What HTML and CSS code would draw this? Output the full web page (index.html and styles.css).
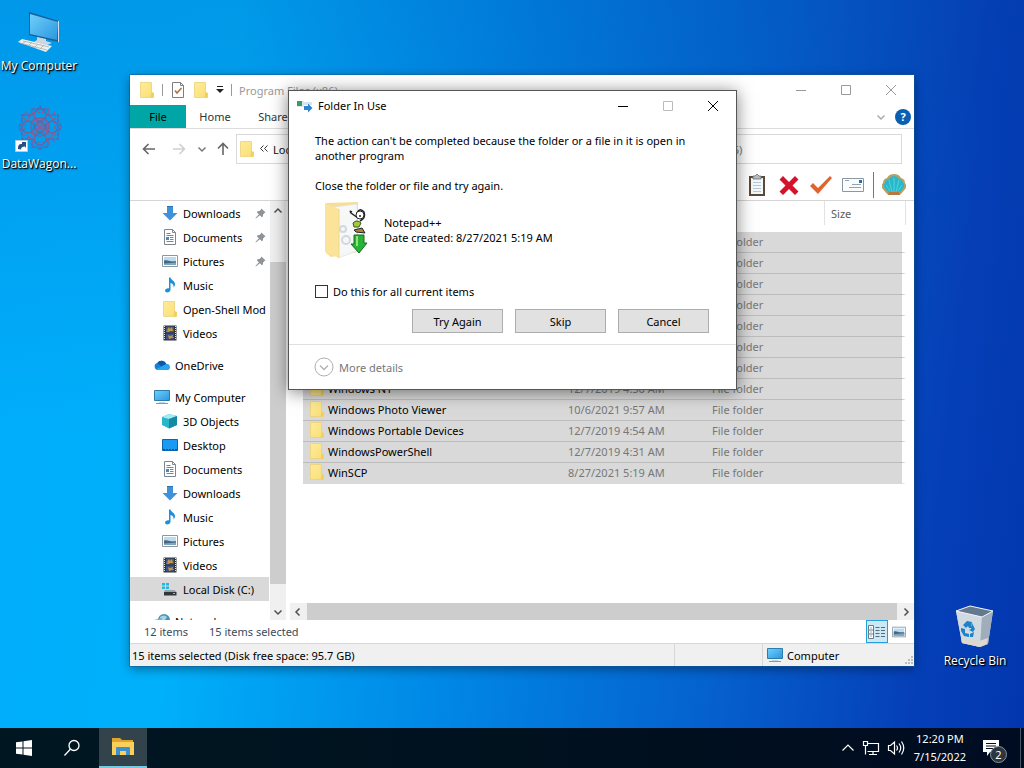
FILE: index.html
```html
<!DOCTYPE html>
<html lang="en">
<head>
    <meta charset="UTF-8">
    <meta name="viewport" content="width=device-width, initial-scale=1.0">
    <title>Desktop</title>
    <link rel="stylesheet" href="styles.css">
</head>
<body>
    <!-- shared icons -->
    <svg class="sprite" aria-hidden="true">
        <defs>
            <linearGradient id="folder-fill" x1="0" y1="0" x2="1" y2="1">
                <stop offset="0" stop-color="#ffec9a"/>
                <stop offset="1" stop-color="#f8de74"/>
            </linearGradient>
            <linearGradient id="screen-fill" x1="0" y1="0" x2="1" y2="1">
                <stop offset="0" stop-color="#6fd0fb"/>
                <stop offset="1" stop-color="#2a96e0"/>
            </linearGradient>
            <symbol id="i-folder" viewBox="0 0 16 16">
                <path d="M1.500.500h11v10l2 .5v4.500h-13z" fill="url(#folder-fill)" stroke="#ecd077" stroke-width=".8"/>
                <path d="M12.500 10.500l-1 5h3v-4.500z" fill="#f0cf5a"/>
            </symbol>
            <symbol id="i-down" viewBox="0 0 16 16">
                <path d="M5 1h6v7h4.500L8 15.500.500 8H5z" fill="#3f92d9"/>
                <path d="M5 1h6v1H5z" fill="#2a72b8"/>
            </symbol>
            <symbol id="i-doc" viewBox="0 0 16 16">
                <path d="M2.500.500h8l3 3v12h-11z" fill="#fff" stroke="#7c8791"/>
                <path d="M10.500.500v3h3" fill="none" stroke="#7c8791"/>
                <path d="M4.500 4.500h4M4.500 6.500h7M8 8.500h3.500M8 10.500h3.500M4.500 12.500h7" stroke="#5590bd"/>
                <path d="M4 8h3v3H4z" fill="#4d88b4"/>
            </symbol>
            <symbol id="i-pic" viewBox="0 0 16 16">
                <path d="M.5 2.500h15v11H.500z" fill="#fff" stroke="#8d979f"/>
                <path d="M2 4h12v8H2z" fill="#b9dcf2"/>
                <path d="M2 7.500c3-1 5 .5 7 .8 2 .3 3-.3 5 0V12H2z" fill="#4a6781"/>
                <path d="M2 10.500l12-1V12H2z" fill="#7ba7bf"/>
            </symbol>
            <symbol id="i-music" viewBox="0 0 16 16">
                <path d="M7 .5h1.500c.3 2.500 4.500 3.300 4.500 6.500 0 1.500-.6 2.500-1.400 3.400.4-2.600-1-3.900-3.100-4.400v6.500c0 1.800-1.600 3-3.300 3-1.400 0-2.200-.8-2.200-1.900 0-1.600 2-2.700 4-2.300z" fill="#1e90d8"/>
            </symbol>
            <symbol id="i-video" viewBox="0 0 16 16">
                <path d="M1.500.500h13v15h-13z" fill="#30343a"/>
                <path d="M2.500 1v14M13.500 1v14" stroke="#e4e6e8" stroke-dasharray="1 1"/>
                <path d="M4 1.500h8v6H4z" fill="#40557f"/>
                <path d="M4 8.500h8v6H4z" fill="#3d4f86"/>
                <path d="M5 5l2-3 1 2 2-2 1 4H6zM6 10l2 1 3-1-1 3-3 1z" fill="#c79a41"/>
                <path d="M4.500 6.500h3M8 12.500h3.500" stroke="#58a9e0"/>
            </symbol>
            <symbol id="i-cloud" viewBox="0 0 16 16">
                <path d="M4 13a3.500 3.500 0 0 1-.7-6.900A5 5 0 0 1 12.300 7 3 3 0 0 1 13 13z" fill="#1580d8"/>
                <path d="M3.300 6.100A5 5 0 0 1 12.300 7L7.500 9.500z" fill="#0c58a8"/>
                <path d="M2 12.300L12.300 7A3 3 0 0 1 13 13H4q-1.200 0-2-.7z" fill="#2aa4ee"/>
            </symbol>
            <symbol id="i-pc" viewBox="0 0 16 16">
                <path d="M.5 1.500h15v10H.500z" fill="url(#screen-fill)" stroke="#2d7cae"/>
                <path d="M2 14.500h12" stroke="#7a9cb2"/>
                <path d="M5 13h6v1H5z" fill="#c6d3dc"/>
            </symbol>
            <symbol id="i-cube" viewBox="0 0 16 16">
                <path d="M0 4l7-3 8 2v9l-8 3.500L0 12z" fill="#2bb5ca"/>
                <path d="M0 4l7-3 8 2-8 3z" fill="#a7ebf2"/>
                <path d="M7 6l8-3v9l-8 3.500z" fill="#138a9f"/>
            </symbol>
            <symbol id="i-desktop" viewBox="0 0 16 16">
                <path d="M.5 2.500h15v11H.500z" fill="#1a9af5" stroke="#0c65ad"/>
                <path d="M1 12.500h14" stroke="#0b4f8c" stroke-dasharray="2 1"/>
            </symbol>
            <symbol id="i-disk" viewBox="0 0 16 16">
                <path d="M0 2h3v2.500H0zM4 2h3v2.500H4zM0 5.500h3V8H0zM4 5.500h3V8H4z" fill="#27b6dd"/>
                <path d="M3 9h9.500l2 2H2z" fill="#9aa3aa"/>
                <path d="M2 11h12.500v3.500H2z" fill="#30363a"/>
                <path d="M11 12.500h2" stroke="#5ee07c"/>
            </symbol>
            <symbol id="i-net" viewBox="0 0 16 16">
                <circle cx="10" cy="7" r="6" fill="#4b94b8"/>
                <path d="M6 4q4-3 7 0l-2 3-4 2z" fill="#a8d6dc"/>
                <path d="M0 7l8-2v8l-8-1z" fill="#67b6e2"/>
            </symbol>
            <symbol id="i-pin" viewBox="0 0 12 12">
                <path d="M7 .5L11.500 5l-1.200.5-1.500 1.500-.3 2.300-1 .7-2.200-2.200L1 11.500.500 11l3.700-4.300L2 4.500l.8-1 2.200-.3L6.600 1.700z" fill="#8c9399"/>
            </symbol>
            <symbol id="i-chev" viewBox="0 0 10 10">
                <path d="M1.500 3.500L5 7l3.500-3.500" fill="none" stroke="currentColor" stroke-width="1.500"/>
            </symbol>
        </defs>
    </svg>

    <main class="desktop">
        <nav class="shortcuts">
            <a class="shortcut" href="#computer">
                <svg width="44" height="44" viewBox="0 0 44 44">
                    <path d="M12 2l30 9-1 21-29-7z" fill="#1d5f96"/>
                    <path d="M13 4l28 8-1 18-27-6z" fill="url(#screen-fill)"/>
                    <path d="M42 11v21l-1 .5V11z" fill="#cfdde8"/>
                    <path d="M20 27l9 2v2l6 2-5 2-13-3 3-2z" fill="#cfd7de"/>
                    <path d="M1 32l4-3 30 7-6 6z" fill="#f0f0ec"/>
                    <path d="M3 33l27 7M6 31l26 6M9 31l-4 3M15 32l-4 4M21 34l-4 4M27 35l-4 4" stroke="#a8b0b5" stroke-width=".8"/>
                </svg>
                <span>My Computer</span>
            </a>
            <a class="shortcut" href="#datawagon">
                <svg width="48" height="50" viewBox="0 0 48 50">
                    <g fill="none" stroke="#7a5296" stroke-width="1.500" opacity=".75">
                        <circle cx="25" cy="25" r="5"/>
                        <circle cx="25" cy="25" r="9" stroke="#c04468"/>
                        <circle cx="25" cy="13" r="6"/>
                        <circle cx="25" cy="37" r="6"/>
                        <circle cx="13" cy="25" r="6"/>
                        <circle cx="37" cy="25" r="6"/>
                        <path d="M7 13h10v-6h6l2-3 2 3h6v6h10v6l3 6-3 6v6H33v8h-6l-2 3-2-3h-6v-8H7v-6l-3-6 3-6z" stroke-dasharray="4 1"/>
                        <path d="M10 10l30 30M40 10L10 40M16 8l18 34M34 8L16 42M8 16l34 18M8 34l34-18" stroke="#a9517e" stroke-dasharray="3 2"/>
                        <circle cx="25" cy="25" r="15" stroke="#cc4060" stroke-dasharray="2 2"/>
                    </g>
                    <path d="M.5 38.500h12v11H.500z" fill="#fff" stroke="#b8cad6"/>
                    <path d="M3 47c0-4 1-5 4-5v-2h4v6l-1-1.500q-4 0-4 3z" fill="#264f83"/>
                </svg>
                <span>DataWagon...</span>
            </a>
        </nav>

        <a class="shortcut recycle" href="#recycle">
            <svg width="44" height="46" viewBox="0 0 44 46">
                <path d="M3 8l14-5 23 5-5 33-8 3-18-4z" fill="#b9c6d4"/>
                <path d="M3 8l14-5 23 5-11 6z" fill="#64788e"/>
                <path d="M3 8l26 6-2 30-18-4z" fill="#d1d9e1"/>
                <path d="M29 14l11-6-5 33-8 3z" fill="#a0adba"/>
                <path d="M8 35l18 3 9-3-1 6-7 3-18-4z" fill="#ddd8d0"/>
                <path d="M3 8l14-5 23 5-11 6z" fill="none" stroke="#edf3f8"/>
                <path d="M10 22l4-4 5 1-1 4 2 2h-4l-1-2-2 2zM19 20l3 6-2 3-4-2 2-1zM8 25l4 1v4l4 1v3l-5-1-3-5zM17 31l4-2-1 5h-3z" fill="#1b82cb"/>
            </svg>
            <span>Recycle Bin</span>
        </a>

        <section class="explorer" aria-label="Program Files (x86)">
            <header class="titlebar">
                <svg class="icon"><use href="#i-folder"/></svg>
                <i class="divider"></i>
                <svg class="icon" viewBox="0 0 16 16">
                    <path d="M2.500.500h8l3 3v12h-11z" fill="#fff" stroke="#7e7e7e"/>
                    <path d="M10.500.500v3h3" fill="none" stroke="#7e7e7e"/>
                    <path d="M5 8.500l2 2.500 4.500-5" fill="none" stroke="#a8763e" stroke-width="1.600"/>
                </svg>
                <svg class="icon"><use href="#i-folder"/></svg>
                <svg class="customize" width="8" height="8" viewBox="0 0 8 8">
                    <path d="M1 .5h6" stroke="#222"/><path d="M0 3h8L4 7z" fill="#222"/>
                </svg>
                <i class="divider"></i>
                <span class="window-title">Program Files (x86)</span>
                <div class="caption">
                    <button type="button" aria-label="Minimize"><svg width="12" height="12" viewBox="0 0 12 12"><path d="M1 6.500h10"/></svg></button>
                    <button type="button" aria-label="Maximize"><svg width="12" height="12" viewBox="0 0 12 12"><path d="M1.500 1.500h9v9h-9z"/></svg></button>
                    <button type="button" aria-label="Close"><svg width="12" height="12" viewBox="0 0 12 12"><path d="M1 1l10 10M11 1L1 11"/></svg></button>
                </div>
            </header>

            <nav class="ribbon">
                <button type="button" class="tab file">File</button>
                <button type="button" class="tab">Home</button>
                <button type="button" class="tab">Share</button>
                <span class="ribbon-end">
                    <svg class="expand" width="10" height="10"><use href="#i-chev"/></svg>
                    <button type="button" class="help" aria-label="Help">?</button>
                </span>
            </nav>

            <div class="address-row">
                <button type="button" aria-label="Back"><svg width="14" height="14" viewBox="0 0 14 14"><path d="M13 7H2M6.500 2L1.500 7l5 5"/></svg></button>
                <button type="button" class="faded" aria-label="Forward"><svg width="14" height="14" viewBox="0 0 14 14"><path d="M1 7h11M7.500 2l5 5-5 5"/></svg></button>
                <button type="button" class="recent" aria-label="Recent locations"><svg width="10" height="10"><use href="#i-chev"/></svg></button>
                <button type="button" class="up" aria-label="Up"><svg width="14" height="14" viewBox="0 0 14 14"><path d="M7 13V2M2 6.500l5-5 5 5"/></svg></button>
                <div class="address">
                    <svg class="icon"><use href="#i-folder"/></svg>
                    <svg width="10" height="10" viewBox="0 0 10 10"><path d="M4.500 1.500L1.500 4.500l3 3M8.500 1.500L5.500 4.500l3 3" fill="none" stroke="#333"/></svg>
                    <span>Local Disk (C:)</span>
                </div>
                <input class="search" type="text" aria-label="Search" placeholder="Search Program Files (x86)">
            </div>

            <div class="toolbar">
                <button type="button" aria-label="Paste">
                    <svg width="24" height="24" viewBox="0 0 24 24">
                        <path d="M4 3h16v20H4z" fill="#5b4a3a"/>
                        <path d="M6 5h12v16H6z" fill="#f3f8fb"/>
                        <path d="M8 9.500h8M8 12.500h8M8 15.500h8M8 18.500h8" stroke="#b6cad6"/>
                        <path d="M8 3h2l2-2 2 2h2v3H8z" fill="#b7bcc0" stroke="#6c7073" stroke-width=".8"/>
                    </svg>
                </button>
                <button type="button" aria-label="Delete">
                    <svg width="24" height="24" viewBox="0 0 24 24">
                        <path d="M6 3l6 6 6-6 3.500 3.500L15.500 12.500l6 6L18 22l-6-6-6 6-3.500-3.500 6-6-6-6z" fill="#d5122b"/>
                    </svg>
                </button>
                <button type="button" aria-label="Properties">
                    <svg width="24" height="24" viewBox="0 0 24 24">
                        <path d="M1 13l3-3 5 5L21 3l2 2L9 21z" fill="#e0632e"/>
                    </svg>
                </button>
                <button type="button" aria-label="Send">
                    <svg width="24" height="24" viewBox="0 0 24 24">
                        <path d="M1.500 5.500h21v13h-21z" fill="#fbfcfd" stroke="#8a98a5"/>
                        <path d="M18 7h3v3h-3z" fill="#2f6ca8"/>
                        <path d="M4 7.500h4M11 11.500h9M8 14.500h12" stroke="#90a4b4"/>
                    </svg>
                </button>
                <i class="tool-divider"></i>
                <button type="button" aria-label="Classic Explorer settings">
                    <svg width="24" height="24" viewBox="0 0 24 24">
                        <path d="M5 21L0 15q-1-3 1-5 0-4 4-5 2-4 7-4t7 4q4 1 4 5 2 2 1 5l-5 6-2 1H7z" fill="#b8a066"/>
                        <path d="M5 18l-3-4q-1-3 1-4 0-3 4-4 2-3 5-3t5 3q4 1 4 4 2 1 1 4l-3 4-7 3z" fill="#27b9cb"/>
                        <path d="M12 20V5M10 19L7 7M14 19l3-12M8 18l-4-6M16 18l4-6" stroke="#5fd8df" stroke-width=".8" fill="none"/>
                        <path d="M7 19h10l1 3H6z" fill="#b8793e"/>
                    </svg>
                </button>
            </div>

            <div class="panes">
                <div class="tree">
                    <ul>
                        <li><svg class="icon"><use href="#i-down"/></svg>Downloads<svg class="pin"><use href="#i-pin"/></svg></li>
                        <li><svg class="icon"><use href="#i-doc"/></svg>Documents<svg class="pin"><use href="#i-pin"/></svg></li>
                        <li><svg class="icon"><use href="#i-pic"/></svg>Pictures<svg class="pin"><use href="#i-pin"/></svg></li>
                        <li><svg class="icon"><use href="#i-music"/></svg>Music</li>
                        <li><svg class="icon"><use href="#i-folder"/></svg>Open-Shell Mod</li>
                        <li><svg class="icon"><use href="#i-video"/></svg>Videos</li>
                        <li class="root"><svg class="icon"><use href="#i-cloud"/></svg>OneDrive</li>
                        <li class="root"><svg class="icon"><use href="#i-pc"/></svg>My Computer</li>
                        <li><svg class="icon"><use href="#i-cube"/></svg>3D Objects</li>
                        <li><svg class="icon"><use href="#i-desktop"/></svg>Desktop</li>
                        <li><svg class="icon"><use href="#i-doc"/></svg>Documents</li>
                        <li><svg class="icon"><use href="#i-down"/></svg>Downloads</li>
                        <li><svg class="icon"><use href="#i-music"/></svg>Music</li>
                        <li><svg class="icon"><use href="#i-pic"/></svg>Pictures</li>
                        <li><svg class="icon"><use href="#i-video"/></svg>Videos</li>
                        <li class="current"><svg class="icon"><use href="#i-disk"/></svg>Local Disk (C:)</li>
                        <li class="root"><svg class="icon"><use href="#i-net"/></svg>Network</li>
                    </ul>
                </div>
                <div class="scroll-v">
                    <svg class="flip" width="10" height="10"><use href="#i-chev"/></svg>
                    <i class="thumb"></i>
                    <svg width="10" height="10"><use href="#i-chev"/></svg>
                </div>
                <div class="files">
                    <table>
                        <colgroup><col class="c-name"><col class="c-date"><col class="c-type"><col class="c-size"></colgroup>
                        <thead>
                            <tr><th></th><th></th><th></th><th>Size</th></tr>
                        </thead>
                        <tbody>
                            <tr><td></td><td></td><td>File folder</td><td></td></tr>
                            <tr><td></td><td></td><td>File folder</td><td></td></tr>
                            <tr><td></td><td></td><td>File folder</td><td></td></tr>
                            <tr><td></td><td></td><td>File folder</td><td></td></tr>
                            <tr><td></td><td></td><td>File folder</td><td></td></tr>
                            <tr><td></td><td></td><td>File folder</td><td></td></tr>
                            <tr><td></td><td></td><td>File folder</td><td></td></tr>
                            <tr><td><svg class="icon"><use href="#i-folder"/></svg>Windows NT</td><td>12/7/2019 4:50 AM</td><td>File folder</td><td></td></tr>
                            <tr><td><svg class="icon"><use href="#i-folder"/></svg>Windows Photo Viewer</td><td>10/6/2021 9:57 AM</td><td>File folder</td><td></td></tr>
                            <tr><td><svg class="icon"><use href="#i-folder"/></svg>Windows Portable Devices</td><td>12/7/2019 4:54 AM</td><td>File folder</td><td></td></tr>
                            <tr><td><svg class="icon"><use href="#i-folder"/></svg>WindowsPowerShell</td><td>12/7/2019 4:31 AM</td><td>File folder</td><td></td></tr>
                            <tr><td><svg class="icon"><use href="#i-folder"/></svg>WinSCP</td><td>8/27/2021 5:19 AM</td><td>File folder</td><td></td></tr>
                        </tbody>
                    </table>
                    <div class="scroll-h">
                        <svg class="left" width="10" height="10"><use href="#i-chev"/></svg>
                        <i class="thumb"></i>
                        <svg class="right" width="10" height="10"><use href="#i-chev"/></svg>
                    </div>
                </div>
            </div>

            <div class="details">
                <span>12 items</span>
                <span>15 items selected</span>
                <div class="views">
                    <button type="button" class="view active" aria-label="Details view">
                        <svg width="18" height="14" viewBox="0 0 18 14">
                            <path d="M.5.500h5v13h-5zM.5 5h5M.5 9h5" fill="#fff" stroke="#6c7d89"/>
                            <path d="M2.500 3h1M2.500 7h1M2.500 11h1" stroke="#2d5f86"/>
                            <path d="M7.500 2.500h4M13 2.500h4M7.500 5.500h4M13 5.500h4M7.500 8.500h4M13 8.500h4M7.500 11.500h4M13 11.500h4" stroke="#5a6a75"/>
                        </svg>
                    </button>
                    <button type="button" class="view" aria-label="Large icons view"><svg width="14" height="14"><use href="#i-pic"/></svg></button>
                </div>
            </div>

            <footer class="status">
                <span class="status-text">15 items selected (Disk free space: 95.7 GB)</span>
                <span class="status-blank"></span>
                <span class="status-zone">
                    <svg class="icon"><use href="#i-pc"/></svg>Computer
                    <svg class="grip" width="10" height="10" viewBox="0 0 10 10">
                        <path d="M7 0h2v2H7zM4 3h2v2H4zM7 3h2v2H7zM1 6h2v2H1zM4 6h2v2H4zM7 6h2v2H7z" fill="#bdbdbd"/>
                    </svg>
                </span>
            </footer>
        </section>

        <section class="dialog" role="dialog" aria-labelledby="dialog-title">
            <header class="dialog-title">
                <svg width="16" height="16" viewBox="0 0 16 16">
                    <path d="M0 3h7v6H0z" fill="#dbe8ee"/><path d="M0 3h5v5H0z" fill="#3d9a5a"/><path d="M5 4h10v3H5z" fill="#d3e5f1"/>
                    <path d="M7 8h4V5.500l4.500 4.500-4.500 4.500V12H7z" fill="#2f83d0"/>
                </svg>
                <h1 id="dialog-title">Folder In Use</h1>
                <div class="caption">
                    <button type="button" aria-label="Minimize"><svg width="12" height="12" viewBox="0 0 12 12"><path d="M1 6.500h10"/></svg></button>
                    <button type="button" aria-label="Maximize" disabled><svg width="12" height="12" viewBox="0 0 12 12"><path d="M1.500 1.500h9v9h-9z"/></svg></button>
                    <button type="button" aria-label="Close"><svg width="12" height="12" viewBox="0 0 12 12"><path d="M1 1l10 10M11 1L1 11"/></svg></button>
                </div>
            </header>
            <div class="dialog-body">
                <p>The action can't be completed because the folder or a file in it is open in<br>another program</p>
                <p>Close the folder or file and try again.</p>
                <div class="item">
                    <svg width="58" height="58" viewBox="0 0 58 58">
                        <path d="M11 2l32-1v50L16 56l-5-4z" fill="#f6df93"/>
                        <path d="M19 6l23-3v47l-19 7z" fill="#f6f7f7" stroke="#dcdfe1" stroke-width=".6"/>
                        <path d="M10 2l14 6v49l-14-6z" fill="#fbe49a"/>
                        <path d="M24 8v49" stroke="#efd98f"/>
                        <circle cx="28" cy="28" r="3" fill="none" stroke="#d3d8dc" stroke-width="2"/>
                        <circle cx="31" cy="39" r="4" fill="none" stroke="#d3d8dc" stroke-width="2"/>
                        <path d="M37 11q-3-2-1 1l7 5M42 12q3-6 7-1 2 6-4 9" fill="none" stroke="#222" stroke-width="1.500"/>
                        <circle cx="45" cy="14" r="4" fill="#fff" stroke="#222"/>
                        <circle cx="45" cy="15" r="1" fill="#222"/>
                        <path d="M38 22q4-4 8 0l-2 4h-5z" fill="#a3c93c" stroke="#365a1c"/>
                        <path d="M39 29l8-2 3 5-9-1z" fill="#a8854a" stroke="#222"/>
                        <path d="M39 34h10v8h3l-8 10-8-9h3z" fill="#26b336" stroke="#186b22"/>
                        <path d="M42 35v10" stroke="#8be878" stroke-width="2"/>
                    </svg>
                    <div>
                        <div>Notepad++</div>
                        <div>Date created: 8/27/2021 5:19 AM</div>
                    </div>
                </div>
                <label class="apply-all" for="apply-all"><input type="checkbox" id="apply-all">Do this for all current items</label>
                <div class="actions">
                    <button type="button">Try Again</button>
                    <button type="button">Skip</button>
                    <button type="button">Cancel</button>
                </div>
            </div>
            <footer class="dialog-foot">
                <button type="button" class="more">
                    <svg width="20" height="20" viewBox="0 0 20 20"><circle cx="10" cy="10" r="9" fill="#fff" stroke="#b0b0b0"/><path d="M6 8.500l4 4 4-4" fill="none" stroke="#b0b0b0" stroke-width="1.300"/></svg>
                    More details
                </button>
            </footer>
        </section>
    </main>

    <footer class="taskbar">
        <button type="button" class="task" aria-label="Start">
            <svg width="16" height="16" viewBox="0 0 16 16"><path d="M0 2.300l6.500-.9v6.100H0zM7.500 1.200L16 0v7.500H7.500zM0 8.500h6.500v6.100L0 13.700zM7.500 8.500H16V16l-8.500-1.200z" fill="#fff"/></svg>
        </button>
        <button type="button" class="task" aria-label="Search">
            <svg width="18" height="18" viewBox="0 0 18 18"><circle cx="11" cy="6.500" r="5" fill="none" stroke="#fff" stroke-width="1.300"/><path d="M7.300 10.300L1.500 16.500" stroke="#fff" stroke-width="1.300"/></svg>
        </button>
        <button type="button" class="task running" aria-label="File Explorer">
            <svg width="22" height="20" viewBox="0 0 22 20">
                <path d="M0 1h8l2 2h11v4H0z" fill="#e2a32c"/>
                <path d="M0 5h22v13H0z" fill="#fbd05a"/>
                <path d="M4 18v-7q0-1 1-1h12q1 0 1 1v7h-4v-4H8v4z" fill="#3d8fcd"/>
            </svg>
        </button>
        <div class="tray">
            <button type="button" aria-label="Show hidden icons"><svg width="14" height="14" viewBox="0 0 14 14"><path d="M1.500 9.500L7 4l5.500 5.500"/></svg></button>
            <button type="button" aria-label="Network"><svg width="18" height="16" viewBox="0 0 18 16"><path d="M5.500 3.500h11v8h-11M11 11.500v3M7 14.500h8M1.500 1.500h4v4h-4zM3.500 5.500v9"/></svg></button>
            <button type="button" aria-label="Volume"><svg width="18" height="16" viewBox="0 0 18 16"><path d="M1.500 5.500h2l4-3.500v12l-4-3.500h-2zM9.500 5.500q2 2.500 0 5M12 3.500q3.500 4.500 0 9M14.500 1.500q4.500 6.500 0 13"/></svg></button>
            <time class="clock">12:20 PM<br>7/15/2022</time>
            <button type="button" class="notify" aria-label="Notifications">
                <svg width="18" height="18" viewBox="0 0 18 18"><path d="M1 1h16v12H8l-3 4v-4H1z" fill="#fff" stroke="none"/><path d="M4 4.500h10M4 7h10M4 9.500h7" stroke="#001220"/></svg>
                <span class="badge">2</span>
            </button>
        </div>
    </footer>
</body>
</html>
```

FILE: styles.css
```css
* {
    box-sizing: border-box;
}
body {
    margin: 0;
    min-height: 100vh;
    display: flex;
    flex-direction: column;
    font-family: "Noto Sans", "Open Sans", sans-serif;
    font-size: 11px;
    line-height: 15px;
    color: #000;
}
button {
    font: inherit;
    color: inherit;
    padding: 0;
    border: none;
    background: none;
}
a {
    text-decoration: none;
}
svg {
    display: block;
    flex: none;
}
.sprite {
    position: absolute;
    width: 0;
    height: 0;
}
.icon {
    width: 16px;
    height: 16px;
}

/* desktop */
.desktop {
    position: relative;
    flex: 1;
    overflow: hidden;
    background:
        linear-gradient(to bottom, rgba(0, 60, 160, 0.2), rgba(0, 60, 160, 0) 60%),
        linear-gradient(97deg, #00aefc 0%, #00b0fa 22%, #0088e6 47%, #0560cd 72%, #053fb8 90%, #0236ae 100%);
}
.shortcuts {
    display: flex;
    flex-direction: column;
    gap: 29px;
    width: 78px;
    padding-top: 10px;
}
.shortcut {
    display: flex;
    flex-direction: column;
    align-items: center;
    gap: 4px;
    color: #fff;
    font-family: "Open Sans", "Noto Sans", sans-serif;
    font-size: 12px;
    text-shadow: 1px 1px 2px #000, 1px 1px 1px #000;
}
.recycle {
    position: absolute;
    right: 12px;
    bottom: 60px;
    width: 74px;
    white-space: nowrap;
}

/* explorer window */
.explorer {
    position: absolute;
    left: 130px;
    right: 110px;
    top: 75px;
    bottom: 62px;
    display: flex;
    flex-direction: column;
    background: #fff;
    box-shadow: 0 0 0 1px rgba(20, 90, 150, 0.5), 0 3px 10px rgba(0, 0, 0, 0.4);
}
.titlebar {
    display: flex;
    align-items: center;
    height: 30px;
    padding-left: 9px;
    gap: 7px;
    color: #999;
}
.divider {
    width: 1px;
    height: 12px;
    background: #999;
}
.caption {
    display: flex;
    margin-left: auto;
    margin-right: 1px;
}
.caption button {
    width: 45px;
    height: 28px;
    display: flex;
    align-items: center;
    justify-content: center;
}
.caption path {
    fill: none;
    stroke: currentColor;
}
.ribbon {
    display: flex;
    height: 24px;
    border-bottom: 1px solid #dcdcdc;
    color: #333;
}
.tab {
    width: 58px;
}
.tab.file {
    width: 56px;
    background: #00a6a6;
    color: #000;
}
.ribbon-end {
    display: flex;
    align-items: center;
    gap: 9px;
    margin-left: auto;
    padding-right: 3px;
    color: #aaa;
}
.help {
    width: 16px;
    height: 16px;
    border-radius: 50%;
    background: #0a5fb0;
    color: #fff;
    font-weight: bold;
    line-height: 16px;
}
.address-row {
    display: flex;
    align-items: center;
    height: 40px;
    padding: 0 12px 0 4px;
    color: #666;
}
.address-row button {
    width: 30px;
    display: flex;
    justify-content: center;
}
.address-row button path {
    fill: none;
    stroke: currentColor;
    stroke-width: 1.6px;
}
.address-row .faded {
    color: #d0d0d0;
}
.address-row .recent {
    width: 16px;
    color: #777;
}
.address-row .up {
    width: 26px;
}
.address {
    flex: 1;
    display: flex;
    align-items: center;
    gap: 4px;
    height: 30px;
    padding-left: 2px;
    border: 1px solid #d9d9d9;
    color: #111;
}
.search {
    width: 40%;
    height: 30px;
    margin-left: 12px;
    padding: 0 10px;
    border: 1px solid #d9d9d9;
    font: inherit;
}
.search::placeholder {
    color: #777;
    opacity: 1;
}
.toolbar {
    display: flex;
    align-items: center;
    justify-content: flex-end;
    gap: 8px;
    height: 32px;
    padding-right: 8px;
    border-bottom: 1px solid #d5d5d5;
}
.tool-divider {
    width: 1px;
    height: 26px;
    background: #777;
}

/* panes */
.panes {
    flex: 1;
    display: flex;
    min-height: 0;
}
.tree {
    width: 140px;
    overflow: hidden;
}
.tree ul {
    margin: 0;
    padding: 0;
    list-style: none;
}
.tree li {
    display: flex;
    align-items: center;
    gap: 5px;
    height: 24px;
    padding-left: 32px;
    white-space: nowrap;
}
.tree .root {
    margin-top: 8px;
    padding-left: 24px;
}
.tree .current {
    margin-right: 1px;
    background: #d9d9d9;
}
.pin {
    width: 11px;
    height: 11px;
    margin-left: auto;
    margin-right: 4px;
}
.scroll-v {
    width: 16px;
    display: flex;
    flex-direction: column;
    align-items: center;
    padding: 5px 0 3px;
    background: #f0f0f0;
    color: #505050;
}
.thumb {
    flex: 1;
    background: #cdcdcd;
}
.scroll-v .thumb {
    width: 100%;
    margin: 46px 0 23px;
}
.flip {
    transform: rotate(180deg);
}
.files {
    flex: 1;
    display: flex;
    flex-direction: column;
    justify-content: space-between;
    min-width: 0;
    padding-left: 4px;
}
table {
    width: calc(100% - 21px);
    margin-left: 13px;
    border-collapse: separate;
    border-spacing: 0;
    table-layout: fixed;
}
.c-date {
    width: 144px;
}
.c-type {
    width: 119px;
}
.c-size {
    width: 81px;
}
th {
    height: 24px;
    padding: 0 6px;
    border-right: 1px solid #e2e2e2;
    font-weight: normal;
    text-align: left;
    color: #5c5c5c;
}
th:nth-child(-n+2) {
    border-right: none;
}
tbody::before {
    content: "";
    display: block;
    height: 7px;
}
td {
    height: 21px;
    padding: 0 6px;
    border-bottom: 1px solid #bcbcbc;
    background: #d9d9d9;
    color: #777;
    line-height: 20px;
    white-space: nowrap;
}
td:first-child {
    color: #000;
}
td:last-child {
    border-right: 4px solid #fff;
}
tr:last-child td {
    border-bottom-color: #d9d9d9;
}
td .icon {
    float: left;
    margin: 1px 3px 0 0;
}
.scroll-h {
    display: flex;
    align-items: center;
    gap: 4px;
    height: 17px;
    padding: 0 3px;
    background: #f0f0f0;
    color: #505050;
}
.scroll-h .thumb {
    height: 17px;
}
.left {
    transform: rotate(90deg);
}
.right {
    transform: rotate(-90deg);
}

/* bottom bars */
.details {
    display: flex;
    align-items: center;
    gap: 21px;
    height: 23px;
    padding-left: 14px;
    color: #3c4a5c;
}
.views {
    display: flex;
    margin-left: auto;
    padding-right: 4px;
}
.view {
    width: 22px;
    height: 23px;
    display: flex;
    align-items: center;
    justify-content: center;
}
.view.active {
    border: 1px solid #26a0da;
    background: #cbe8f6;
}
.status {
    display: flex;
    height: 23px;
    border-top: 1px solid #d7d7d7;
    background: #f0f0f0;
    line-height: 23px;
}
.status-text {
    flex: 1;
    padding-left: 2px;
}
.status-blank {
    width: 88px;
    border-left: 1px solid #d7d7d7;
}
.status-zone {
    display: flex;
    align-items: center;
    gap: 4px;
    width: 152px;
    padding-left: 4px;
    border-left: 1px solid #d7d7d7;
}
.grip {
    margin-left: auto;
    align-self: flex-end;
}

/* dialog */
.dialog {
    position: absolute;
    left: 288px;
    top: 90px;
    width: 449px;
    border: 1px solid #555;
    background: #fff;
    box-shadow: 0 2px 16px rgba(0, 0, 0, 0.5);
}
.dialog-title {
    display: flex;
    align-items: center;
    gap: 5px;
    height: 29px;
    padding-left: 8px;
    color: #000;
}
.dialog-title h1 {
    margin: 0;
    font-size: 11px;
    font-weight: normal;
}
.dialog-title button:disabled {
    color: #bbb;
}
.dialog-body {
    padding: 13px 27px 11px 26px;
}
.dialog-body p {
    margin: 0 0 15px;
    white-space: nowrap;
}
.item {
    display: flex;
    align-items: center;
    gap: 11px;
    margin-top: -7px;
}
.apply-all {
    display: flex;
    align-items: center;
    gap: 5px;
    margin-top: 25px;
}
.apply-all input {
    appearance: none;
    width: 13px;
    height: 13px;
    margin: 0;
    border: 1px solid #333;
}
.actions {
    display: flex;
    justify-content: flex-end;
    gap: 12px;
    margin-top: 10px;
}
.actions button {
    width: 91px;
    height: 24px;
    border: 1px solid #adadad;
    background: #e1e1e1;
}
.dialog-foot {
    padding: 12px 25px;
    border-top: 1px solid #dfdfdf;
}
.more {
    display: flex;
    align-items: center;
    gap: 5px;
    color: #777;
}

/* taskbar */
.taskbar {
    display: flex;
    height: 40px;
    background: linear-gradient(to right, #001722, #00101e 60%, #000c22);
    color: #fff;
}
.task {
    width: 48px;
    display: flex;
    align-items: center;
    justify-content: center;
}
.task.running {
    margin-left: 3px;
    border-bottom: 2px solid #76c8e0;
    background: #33434c;
}
.tray {
    display: flex;
    align-items: center;
    gap: 7px;
    margin-left: auto;
    margin-right: 3px;
    padding-right: 20px;
    border-right: 1px solid #4a5566;
}
.tray path {
    fill: none;
    stroke: #fff;
    stroke-width: 1.2px;
}
.tray .notify path:first-child {
    fill: #fff;
    stroke: none;
}
.tray .notify path:last-child {
    stroke: #001220;
}
.clock {
    margin: 0 9px 0 2px;
    line-height: 18px;
    text-align: center;
}
.notify {
    position: relative;
}
.badge {
    position: absolute;
    left: 8px;
    top: 7px;
    width: 17px;
    height: 17px;
    border: 1px solid #8a939c;
    border-radius: 50%;
    background: #2c3640;
    line-height: 15px;
}
```
